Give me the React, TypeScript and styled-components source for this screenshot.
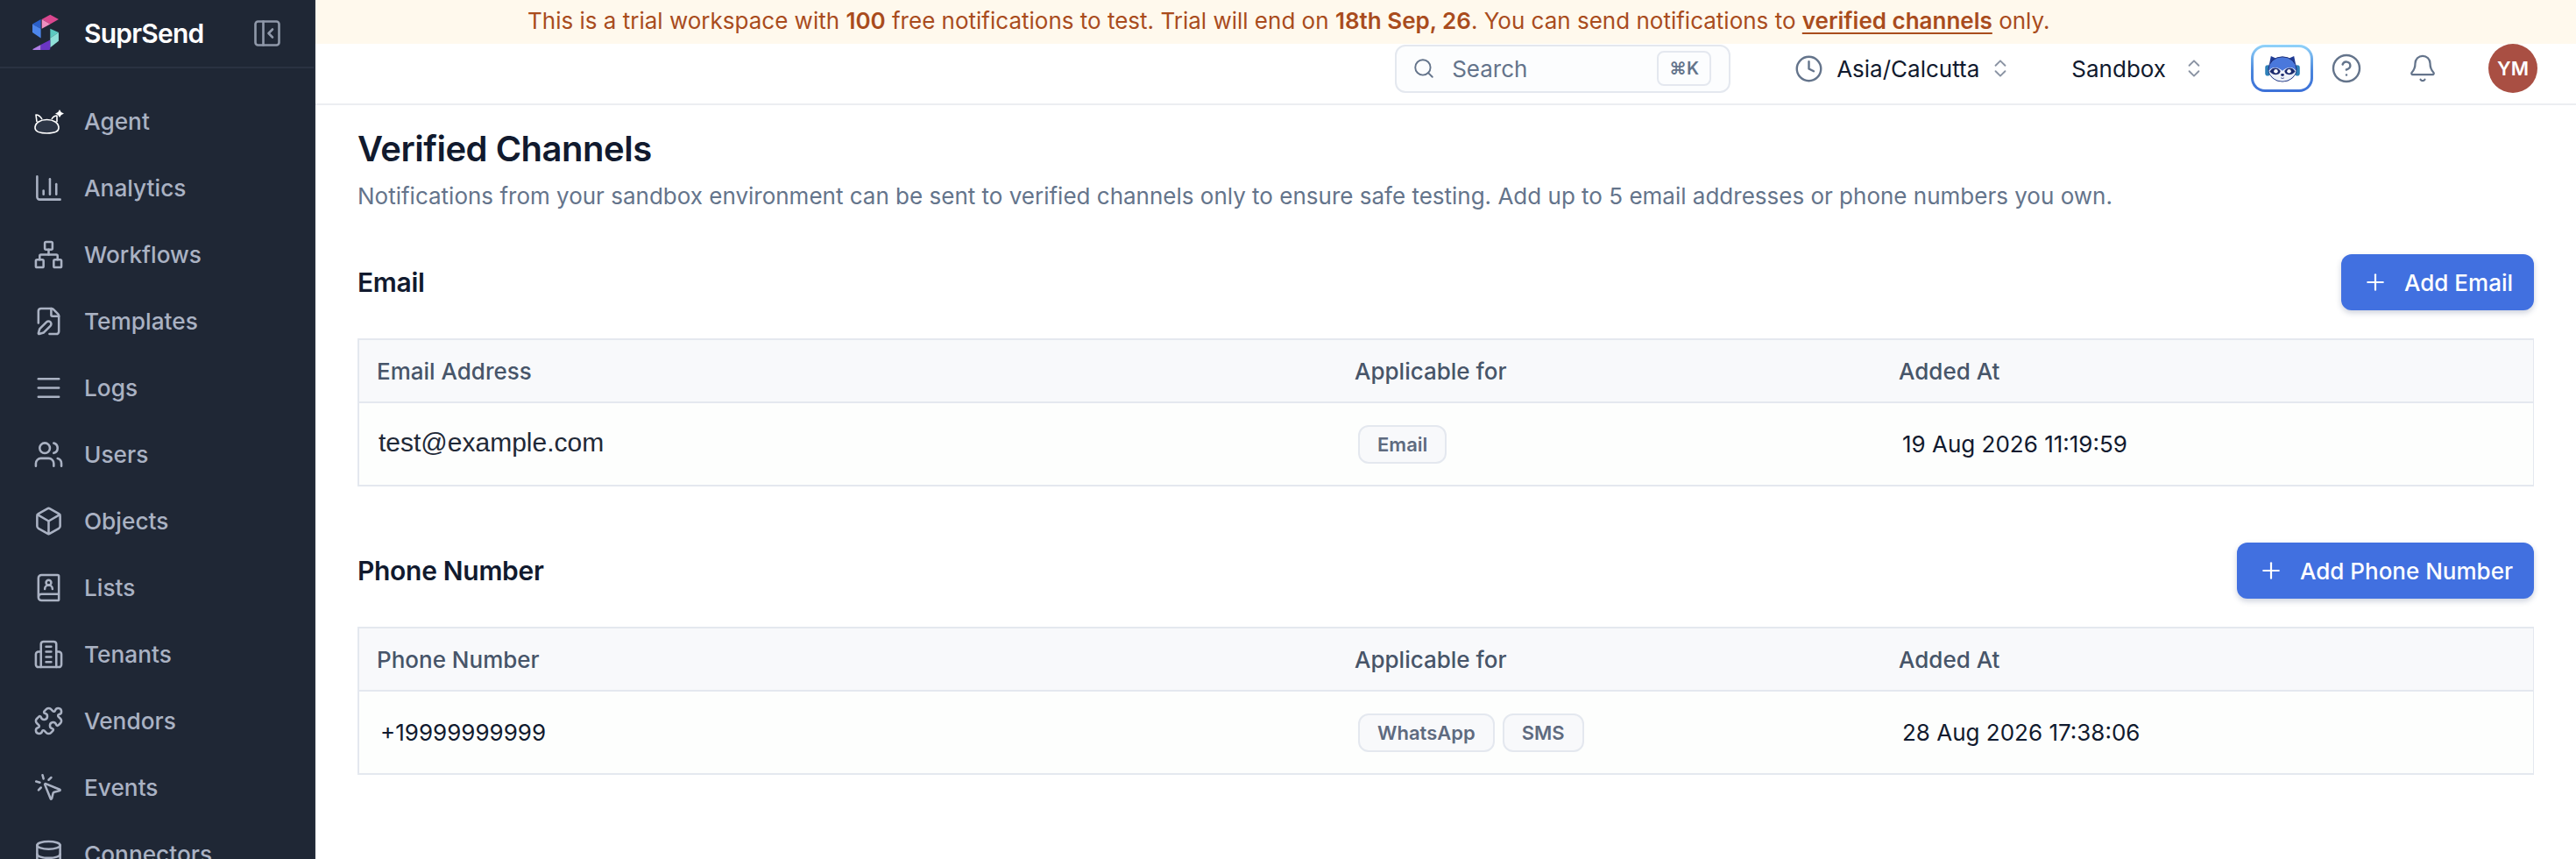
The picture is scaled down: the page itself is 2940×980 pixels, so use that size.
import React from 'react'
import styled, { createGlobalStyle } from 'styled-components'
import {
  Bell,
  BookUser,
  Box,
  ChartColumn,
  ChevronsUpDown,
  CircleHelp,
  Clock,
  Database,
  FilePen,
  Menu,
  MousePointerClick,
  Network,
  PanelLeftClose,
  Plus,
  Puzzle,
  Search,
  Users,
} from 'lucide-react'

const GlobalStyle = createGlobalStyle`
  html, body {
    margin: 0;
    width: 2940px;
    height: 980px;
    overflow: hidden;
    background: #fff;
    font-family: Inter, "Noto Sans", sans-serif;
  }
`

const Page = styled.div`
  display: grid;
  grid-template-columns: 360px 1fr;
  width: 2940px;
  height: 980px;
  overflow: hidden;
`
const Sidebar = styled.aside`
  background: #1f2735;
  box-sizing: border-box;
  border-right: 2px solid #252d3b;
  overflow: hidden;
`
const Brand = styled.div`
  display: flex;
  align-items: center;
  height: 76px;
  padding-left: 37px;
  border-bottom: 2px solid #2a3241;
`
const LogoMark = styled.svg`
  flex: none;
  margin-top: -4px;
`
const BrandName = styled.span`
  margin-left: 28px;
  width: 191px;
  color: #fff;
  font-size: 30px;
  font-weight: 600;
  letter-spacing: -0.8px;
`
const Collapse = styled.span`
  display: flex;
  color: #8f98a9;
`
const Nav = styled.nav`
  padding-top: 22px;
`
const NavItem = styled.div`
  display: flex;
  align-items: center;
  height: 76px;
  padding-left: 38px;
  gap: 23px;
  color: #aab2c3;
  font-size: 26.25px;
  font-weight: 500;

  svg {
    flex: none;
  }
`
const Main = styled.main`
  display: flex;
  flex-direction: column;
  min-width: 0;
`
const Banner = styled.div`
  height: 50px;
  line-height: 48px;
  padding-left: 242px;
  background: #fff9ed;
  color: #a94c1d;
  font-size: 26px;

  b {
    font-weight: 600;
  }
  u {
    font-weight: 600;
    text-underline-offset: 4px;
  }
`
const Topbar = styled.header`
  display: flex;
  align-items: center;
  justify-content: flex-end;
  box-sizing: border-box;
  height: 70px;
  padding: 0 44px 12px 0;
  border-bottom: 2px solid #eceef1;
`
const SearchBox = styled.div`
  display: flex;
  align-items: center;
  box-sizing: border-box;
  width: 383px;
  height: 55px;
  padding: 0 20px 0 18px;
  border: 2px solid #e4e8ef;
  border-radius: 12px;
  background: #fcfdfe;
  color: #64748b;
  font-size: 26px;
`
const SearchLabel = styled.span`
  flex: 1;
  margin-left: 19px;
`
const Kbd = styled.kbd`
  display: flex;
  align-items: center;
  justify-content: center;
  width: 62px;
  height: 40px;
  box-sizing: border-box;
  border: 2px solid #e4e8ef;
  border-radius: 8px;
  color: #64748b;
  font-family: Inter, "DejaVu Sans", sans-serif;
  font-size: 20px;
  font-weight: 600;
`
const Picker = styled.div<{ $left: number }>`
  display: flex;
  align-items: center;
  margin-left: ${(p) => p.$left}px;
  color: #111a2e;
  font-size: 26px;
`
const PickerLabel = styled.span<{ $left?: number; $right: number }>`
  margin: 0 ${(p) => p.$right}px 0 ${(p) => p.$left ?? 0}px;
`
const Muted = styled.span<{ $left?: number }>`
  display: flex;
  margin-left: ${(p) => p.$left ?? 0}px;
  color: #64748b;
`
const ChevronWrap = styled.span`
  display: flex;
  color: #8a93a3;
`
const AgentButton = styled.div`
  display: flex;
  align-items: center;
  justify-content: center;
  box-sizing: border-box;
  width: 71px;
  height: 54px;
  margin-left: 52px;
  border: 3px solid transparent;
  border-radius: 16px;
  background:
    linear-gradient(#fff, #fff) padding-box,
    linear-gradient(180deg, #92d4fa 0%, #4a86dc 55%, #3c70d8 100%) border-box;
`
const Avatar = styled.div`
  display: flex;
  align-items: center;
  justify-content: center;
  width: 56px;
  height: 56px;
  margin-left: 58px;
  border-radius: 50%;
  background: #a94f43;
  color: #fff;
  font-size: 22px;
  font-weight: 600;
`
const Content = styled.div`
  padding: 20px 48px 0 48px;
`
const Title = styled.h1`
  margin: 0;
  color: #111a2e;
  font-size: 40px;
  line-height: 60px;
  font-weight: 600;
  letter-spacing: -0.5px;
`
const Description = styled.p`
  margin: 4px 0 0;
  color: #64748b;
  font-size: 26px;
  line-height: 40px;
`
const SectionHead = styled.div<{ $top: number }>`
  display: flex;
  align-items: center;
  justify-content: space-between;
  margin-top: ${(p) => p.$top}px;
`
const SectionTitle = styled.h2`
  margin: 0;
  color: #111a2e;
  font-size: 30px;
  font-weight: 600;
  letter-spacing: -0.3px;
`
const AddButton = styled.button`
  display: flex;
  align-items: center;
  gap: 18px;
  height: 64px;
  padding: 0 24px 0 24px;
  border: 0;
  border-radius: 12px;
  background: #4170e0;
  box-shadow: 0 3px 6px rgba(30, 50, 100, 0.22);
  color: #fff;
  font-family: inherit;
  font-size: 26px;
  font-weight: 500;
`
const Table = styled.div`
  margin-top: 32px;
  border: 2px solid #e4e8ef;
  border-right-width: 1px;
`
const Row = styled.div<{ $head?: boolean }>`
  display: grid;
  grid-template-columns: 1116px 621px 1fr;
  align-items: center;
  box-sizing: border-box;
  height: ${(p) => (p.$head ? 72 : 93)}px;
  padding-left: 20px;
  background: ${(p) => (p.$head ? '#f8f9fb' : '#fdfefd')};
  border-bottom: ${(p) => (p.$head ? '2px solid #e4e8ef' : '0')};
`
const HeadCell = styled.div`
  color: #475569;
  font-size: 26px;
  font-weight: 500;
`
const EmailCell = styled.div`
  padding-left: 2px;
  color: #1f2937;
  font-family: "Liberation Sans", Arial, sans-serif;
  font-size: 30px;
  margin-top: -4px;
`
const PhoneCell = styled.div`
  padding-left: 4px;
  color: #111a2e;
  font-size: 26px;
`
const DateCell = styled.div`
  padding-left: 4px;
  color: #111a2e;
  font-size: 26px;
`
const Badges = styled.div`
  display: flex;
  gap: 9px;
  padding-left: 4px;
`
const Badge = styled.span`
  box-sizing: border-box;
  height: 44px;
  line-height: 40px;
  padding: 0 20px;
  border: 2px solid #e4e8ef;
  border-radius: 12px;
  background: #f8f9fb;
  color: #5e6a7f;
  font-size: 22px;
  font-weight: 600;
`

const Logo = () => (
  <LogoMark width="31" height="42" viewBox="8 4 29 38">
    <polygon points="18,10 27,5 36,10 27,15" fill="#d9478f" />
    <polygon points="18,10 27,15 18,20" fill="#ee8fc0" />
    <polygon points="8,15 17,10 17,20" fill="#2a5fc9" />
    <polygon points="8,15 17,20 17,30 8,24" fill="#4d86ec" />
    <polygon points="27,20 36,24 27,30" fill="#5cc9c0" />
    <polygon points="36,24 36,33 27,40 27,30" fill="#8fe0d8" />
    <polygon points="8,42 17,37 17,47" fill="#b07ee6" />
    <polygon points="17,37 27,32 27,42 17,47" fill="#6b36c4" />
  </LogoMark>
)

const AgentIcon = () => (
  <svg width="35" height="35" viewBox="0 0 35 35" fill="none" stroke="#fff" strokeWidth="1.6" strokeLinejoin="round">
    <path d="M4 18 L3 10 Q7 10 10 15" />
    <path d="M21 15 Q23 11 27 11 L27 18" />
    <path d="M2 25 C2 19 8 15.5 15.5 15.5 C23 15.5 29 19 29 25 C29 29 23 31 15.5 31 C8 31 2 29 2 25 Z" fill="#2d3646" />
    <path d="M30 4 L31.8 7 L35 8.5 L31.8 10.2 L30 13 L28.2 10.2 L25 8.5 L28.2 7 Z" fill="#fff" stroke="none" />
  </svg>
)

const TenantIcon = () => (
  <svg width="35" height="35" viewBox="0 0 24 24" fill="none" stroke="currentColor" strokeWidth="1.75" strokeLinecap="round" strokeLinejoin="round">
    <path d="M6 22V4a2 2 0 0 1 2-2h8a2 2 0 0 1 2 2v18Z" />
    <path d="M6 10H4a2 2 0 0 0-2 2v8a2 2 0 0 0 2 2h2" />
    <path d="M18 10h2a2 2 0 0 1 2 2v8a2 2 0 0 1-2 2h-2" />
    <path d="M10 6h4M10 10h4M10 14h4M10 18h4" />
  </svg>
)

const Raccoon = () => (
  <svg width="42" height="32" viewBox="0 0 44 34">
    <rect x="1" y="13" width="6" height="13" rx="3" fill="#2e80b8" />
    <rect x="37" y="13" width="6" height="13" rx="3" fill="#2e80b8" />
    <polygon points="6,12 8,2 17,6" fill="#1f3a94" />
    <polygon points="38,12 36,2 27,6" fill="#1f3a94" />
    <ellipse cx="22" cy="18" rx="17" ry="15" fill="#4a78dc" stroke="#1c2a6e" strokeWidth="1" />
    <path d="M5.5 20 C9 14 17 15 22 20 C27 15 35 14 38.5 20 C37 28 29 32.5 22 32.5 C15 32.5 7 28 5.5 20 Z" fill="#eef1f8" />
    <path d="M6.5 21 C9 15 16.5 15 19.5 20 C19.5 25 12 27 6.5 21 Z" fill="#1c2a6e" />
    <path d="M37.5 21 C35 15 27.5 15 24.5 20 C24.5 25 32 27 37.5 21 Z" fill="#1c2a6e" />
    <circle cx="14" cy="20.5" r="2.4" fill="#fff" />
    <circle cx="30" cy="20.5" r="2.4" fill="#fff" />
    <ellipse cx="22" cy="25" rx="2" ry="1.5" fill="#1c2a6e" />
    <path d="M20 28.5 Q22 30 24 28.5" stroke="#1c2a6e" strokeWidth="0.8" fill="none" />
  </svg>
)

const navItems: { label: string; icon: React.ReactNode }[] = [
  { label: 'Agent', icon: <AgentIcon /> },
  { label: 'Analytics', icon: <ChartColumn size={35} strokeWidth={1.75} /> },
  { label: 'Workflows', icon: <Network size={35} strokeWidth={1.75} /> },
  { label: 'Templates', icon: <FilePen size={35} strokeWidth={1.75} /> },
  { label: 'Logs', icon: <Menu size={35} strokeWidth={1.75} /> },
  { label: 'Users', icon: <Users size={35} strokeWidth={1.75} /> },
  { label: 'Objects', icon: <Box size={35} strokeWidth={1.75} /> },
  { label: 'Lists', icon: <BookUser size={35} strokeWidth={1.75} /> },
  { label: 'Tenants', icon: <TenantIcon /> },
  { label: 'Vendors', icon: <Puzzle size={35} strokeWidth={1.75} /> },
  { label: 'Events', icon: <MousePointerClick size={35} strokeWidth={1.75} /> },
  { label: 'Connectors', icon: <Database size={35} strokeWidth={1.75} /> },
]

const App = () => {
  return (
    <Page>
      <GlobalStyle />
      <Sidebar>
        <Brand>
          <Logo />
          <BrandName>SuprSend</BrandName>
          <Collapse>
            <PanelLeftClose size={36} strokeWidth={1.75} />
          </Collapse>
        </Brand>
        <Nav>
          {navItems.map((item) => (
            <NavItem key={item.label}>
              {item.icon}
              {item.label}
            </NavItem>
          ))}
        </Nav>
      </Sidebar>
      <Main>
        <Banner>
          This is a trial workspace with <b>100</b> free notifications to test. Trial will end on{' '}
          <b>18th Sep, 26</b>. You can send notifications to <u>verified channels</u> only.
        </Banner>
        <Topbar>
          <SearchBox>
            <Search size={26} strokeWidth={1.75} />
            <SearchLabel>Search</SearchLabel>
            <Kbd>⌘K</Kbd>
          </SearchBox>
          <Picker $left={73}>
            <Muted>
              <Clock size={33} strokeWidth={1.75} />
            </Muted>
            <PickerLabel $left={15} $right={11}>
              Asia/Calcutta
            </PickerLabel>
            <ChevronWrap>
              <ChevronsUpDown size={26} strokeWidth={1.75} />
            </ChevronWrap>
          </Picker>
          <Picker $left={68}>
            <PickerLabel $right={19}>Sandbox</PickerLabel>
            <ChevronWrap>
              <ChevronsUpDown size={26} strokeWidth={1.75} />
            </ChevronWrap>
          </Picker>
          <AgentButton>
            <Raccoon />
          </AgentButton>
          <Muted $left={20}>
            <CircleHelp size={36} strokeWidth={1.6} />
          </Muted>
          <Muted $left={52}>
            <Bell size={34} strokeWidth={1.6} />
          </Muted>
          <Avatar>YM</Avatar>
        </Topbar>
        <Content>
          <Title>Verified Channels</Title>
          <Description>
            Notifications from your sandbox environment can be sent to verified channels only to ensure safe testing.
            Add up to 5 email addresses or phone numbers you own.
          </Description>

          <SectionHead $top={46}>
            <SectionTitle>Email</SectionTitle>
            <AddButton>
              <Plus size={30} strokeWidth={1.75} />
              Add Email
            </AddButton>
          </SectionHead>
          <Table>
            <Row $head>
              <HeadCell>Email Address</HeadCell>
              <HeadCell>Applicable for</HeadCell>
              <HeadCell>Added At</HeadCell>
            </Row>
            <Row>
              <EmailCell>test@example.com</EmailCell>
              <Badges>
                <Badge>Email</Badge>
              </Badges>
              <DateCell>19 Aug 2026 11:19:59</DateCell>
            </Row>
          </Table>

          <SectionHead $top={64}>
            <SectionTitle>Phone Number</SectionTitle>
            <AddButton>
              <Plus size={30} strokeWidth={1.75} />
              Add Phone Number
            </AddButton>
          </SectionHead>
          <Table>
            <Row $head>
              <HeadCell>Phone Number</HeadCell>
              <HeadCell>Applicable for</HeadCell>
              <HeadCell>Added At</HeadCell>
            </Row>
            <Row>
              <PhoneCell>+19999999999</PhoneCell>
              <Badges>
                <Badge>WhatsApp</Badge>
                <Badge>SMS</Badge>
              </Badges>
              <DateCell>28 Aug 2026 17:38:06</DateCell>
            </Row>
          </Table>
        </Content>
      </Main>
    </Page>
  )
}

export default App
